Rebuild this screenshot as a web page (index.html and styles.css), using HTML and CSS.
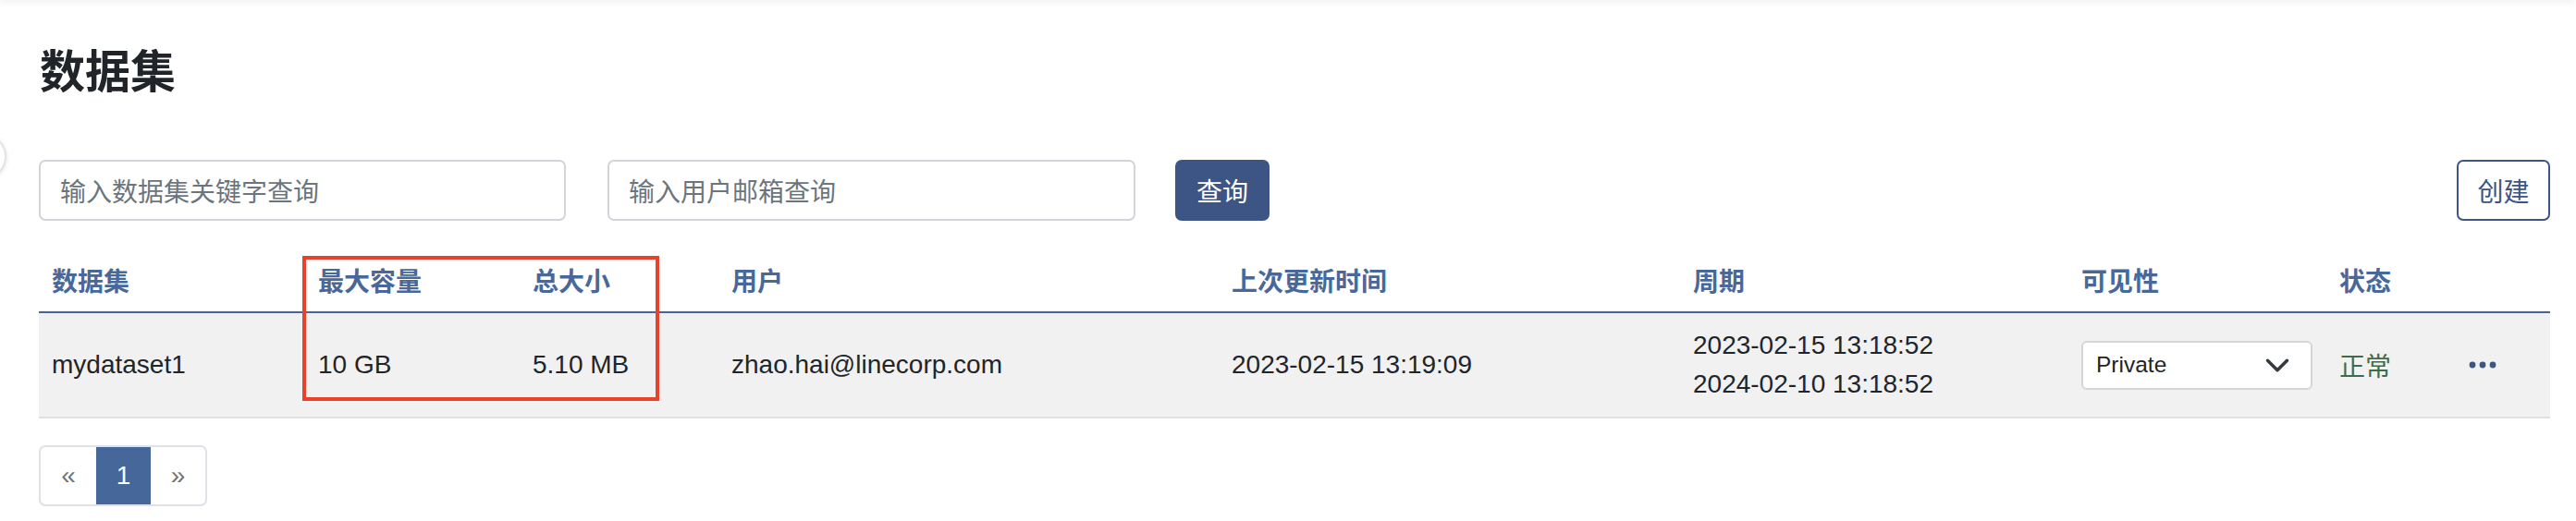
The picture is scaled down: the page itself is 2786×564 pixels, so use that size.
FILE: index.html
```html
<!DOCTYPE html>
<html lang="zh-CN">
<head>
<meta charset="utf-8">
<title>数据集</title>
<link rel="stylesheet" href="styles.css">
</head>
<body>
<div class="topbar"></div>
<div class="knob"></div>
<main class="page">
  <h1 class="title">数据集</h1>
  <div class="search-row">
    <input class="input input-name" type="text" placeholder="输入数据集关键字查询">
    <input class="input input-mail" type="text" placeholder="输入用户邮箱查询">
    <button class="btn btn-primary">查询</button>
    <button class="btn btn-outline">创建</button>
  </div>
  <div class="table-wrap">
    <table class="table">
      <colgroup>
        <col class="c-name"><col class="c-cap"><col class="c-size"><col class="c-user"><col class="c-upd"><col class="c-period"><col class="c-vis"><col class="c-state"><col class="c-more">
      </colgroup>
      <thead>
        <tr>
          <th>数据集</th><th>最大容量</th><th>总大小</th><th>用户</th><th>上次更新时间</th><th>周期</th><th>可见性</th><th>状态</th><th></th>
        </tr>
      </thead>
      <tbody>
        <tr>
          <td>mydataset1</td>
          <td>10 GB</td>
          <td>5.10 MB</td>
          <td>zhao.hai@linecorp.com</td>
          <td>2023-02-15 13:19:09</td>
          <td>2023-02-15 13:18:52<br>2024-02-10 13:18:52</td>
          <td>
            <div class="select">
              <span>Private</span>
              <svg class="chev" viewBox="0 0 16 12" width="28" height="21"><path d="M2 3 8 9 14 3" fill="none" stroke="#343a40" stroke-width="2" stroke-linecap="round" stroke-linejoin="round"/></svg>
            </div>
          </td>
          <td class="ok">正常</td>
          <td>
            <svg class="dots" viewBox="0 0 30 8" width="30" height="8"><circle cx="4" cy="4" r="3.4" fill="#3b5586"/><circle cx="15" cy="4" r="3.4" fill="#3b5586"/><circle cx="26" cy="4" r="3.4" fill="#3b5586"/></svg>
          </td>
        </tr>
      </tbody>
    </table>
    <div class="highlight"></div>
  </div>
  <ul class="pager">
    <li class="pg pg-prev">«</li>
    <li class="pg pg-active">1</li>
    <li class="pg pg-next">»</li>
  </ul>
</main>
</body>
</html>
```
FILE: styles.css
```css
* { box-sizing: border-box; }
html, body { margin: 0; padding: 0; background: #fff; }
body {
  font-family: "Liberation Sans", "Noto Sans CJK SC", sans-serif;
  font-size: 28px;
  color: #212529;
  width: 2786px;
  height: 564px;
  overflow: hidden;
  position: relative;
}
.topbar {
  position: absolute;
  left: 0; right: 0; top: -4px;
  height: 4px;
  box-shadow: 0 1px 8px rgba(0,0,0,0.12);
}
.knob {
  position: absolute;
  left: -42px; top: 145px;
  width: 49px; height: 49px;
  border-radius: 50%;
  background: #fff;
  border: 2px solid #e4e4e4;
  box-shadow: 0 1px 4px rgba(0,0,0,0.12);
}
.page {
  padding: 44px 28px 0 42px;
}
.title {
  margin: 0;
  font-size: 49px;
  line-height: 59px;
  font-weight: 700;
  font-family: "Noto Sans CJK SC", sans-serif;
  color: #212529;
  padding-left: 1px;
}
.search-row {
  display: flex;
  align-items: center;
  margin-top: 70px;
  height: 66px;
}
.input {
  height: 66px;
  border: 2px solid #d1d5da;
  border-radius: 7px;
  padding: 0 21px;
  font-family: "Noto Sans CJK SC", sans-serif;
  font-size: 28px;
  color: #212529;
  background: #fff;
  outline: none;
}
.input::placeholder { color: #6c757d; }
.input-name { width: 570px; margin-right: 45px; }
.input-mail { width: 571px; margin-right: 43px; }
.btn {
  height: 66px;
  border-radius: 7px;
  font-family: "Noto Sans CJK SC", sans-serif;
  font-size: 28px;
  padding: 0;
  white-space: nowrap;
  text-align: center;
  cursor: pointer;
}
.btn-primary {
  width: 102px;
  background: #3d5584;
  border: 2px solid #3d5584;
  color: #fff;
}
.btn-outline {
  margin-left: auto;
  width: 101px;
  background: #fff;
  border: 2px solid #3d5584;
  color: #3d5584;
}
.table-wrap {
  position: relative;
  margin-top: 30px;
}
.table {
  width: 2716px;
  border-collapse: collapse;
  table-layout: fixed;
}
.c-name { width: 288px; }
.c-cap { width: 232px; }
.c-size { width: 215px; }
.c-user { width: 541px; }
.c-upd { width: 499px; }
.c-period { width: 420px; }
.c-vis { width: 279px; }
.c-state { width: 140px; }
.c-more { width: 102px; }
.table th {
  text-align: left;
  font-family: "Noto Sans CJK SC", sans-serif;
  font-weight: 700;
  color: #48689b;
  font-size: 28px;
  line-height: 42px;
  padding: 13px 14px 13px;
  border-bottom: 2px solid #46659a;
}
.table td {
  background: #f1f1f1;
  font-size: 28px;
  line-height: 42px;
  padding: 14px 14px;
  vertical-align: middle;
  border-bottom: 2px solid #dee2e6;
  white-space: nowrap;
  color: #212529;
}
.table td.ok {
  font-family: "Noto Sans CJK SC", sans-serif;
  color: #3f6b4d;
}
.select {
  width: 250px;
  height: 53px;
  background: #fff;
  border: 2px solid #d3d7dc;
  border-radius: 6px;
  display: flex;
  align-items: center;
  justify-content: space-between;
  padding: 0 22px 0 14px;
  font-size: 24.5px;
  color: #212529;
}
.chev { display: block; }
.dots { display: block; }
.highlight {
  position: absolute;
  left: 285px; top: 8px;
  width: 386px; height: 157px;
  border: 4px solid #e8412c;
  pointer-events: none;
}
.pager {
  list-style: none;
  margin: 29px 0 0;
  padding: 0;
  display: flex;
  width: 182px;
  height: 66px;
  border: 2px solid #dee2e6;
  border-radius: 7px;
  overflow: hidden;
}
.pg {
  display: flex;
  align-items: center;
  justify-content: center;
  font-size: 28px;
  color: #6c757d;
}
.pg-prev { width: 60px; }
.pg-active { width: 59px; background: #46679a; color: #fff; margin-top: -2px; margin-bottom: -2px; }
.pg-next { width: 59px; }
```
